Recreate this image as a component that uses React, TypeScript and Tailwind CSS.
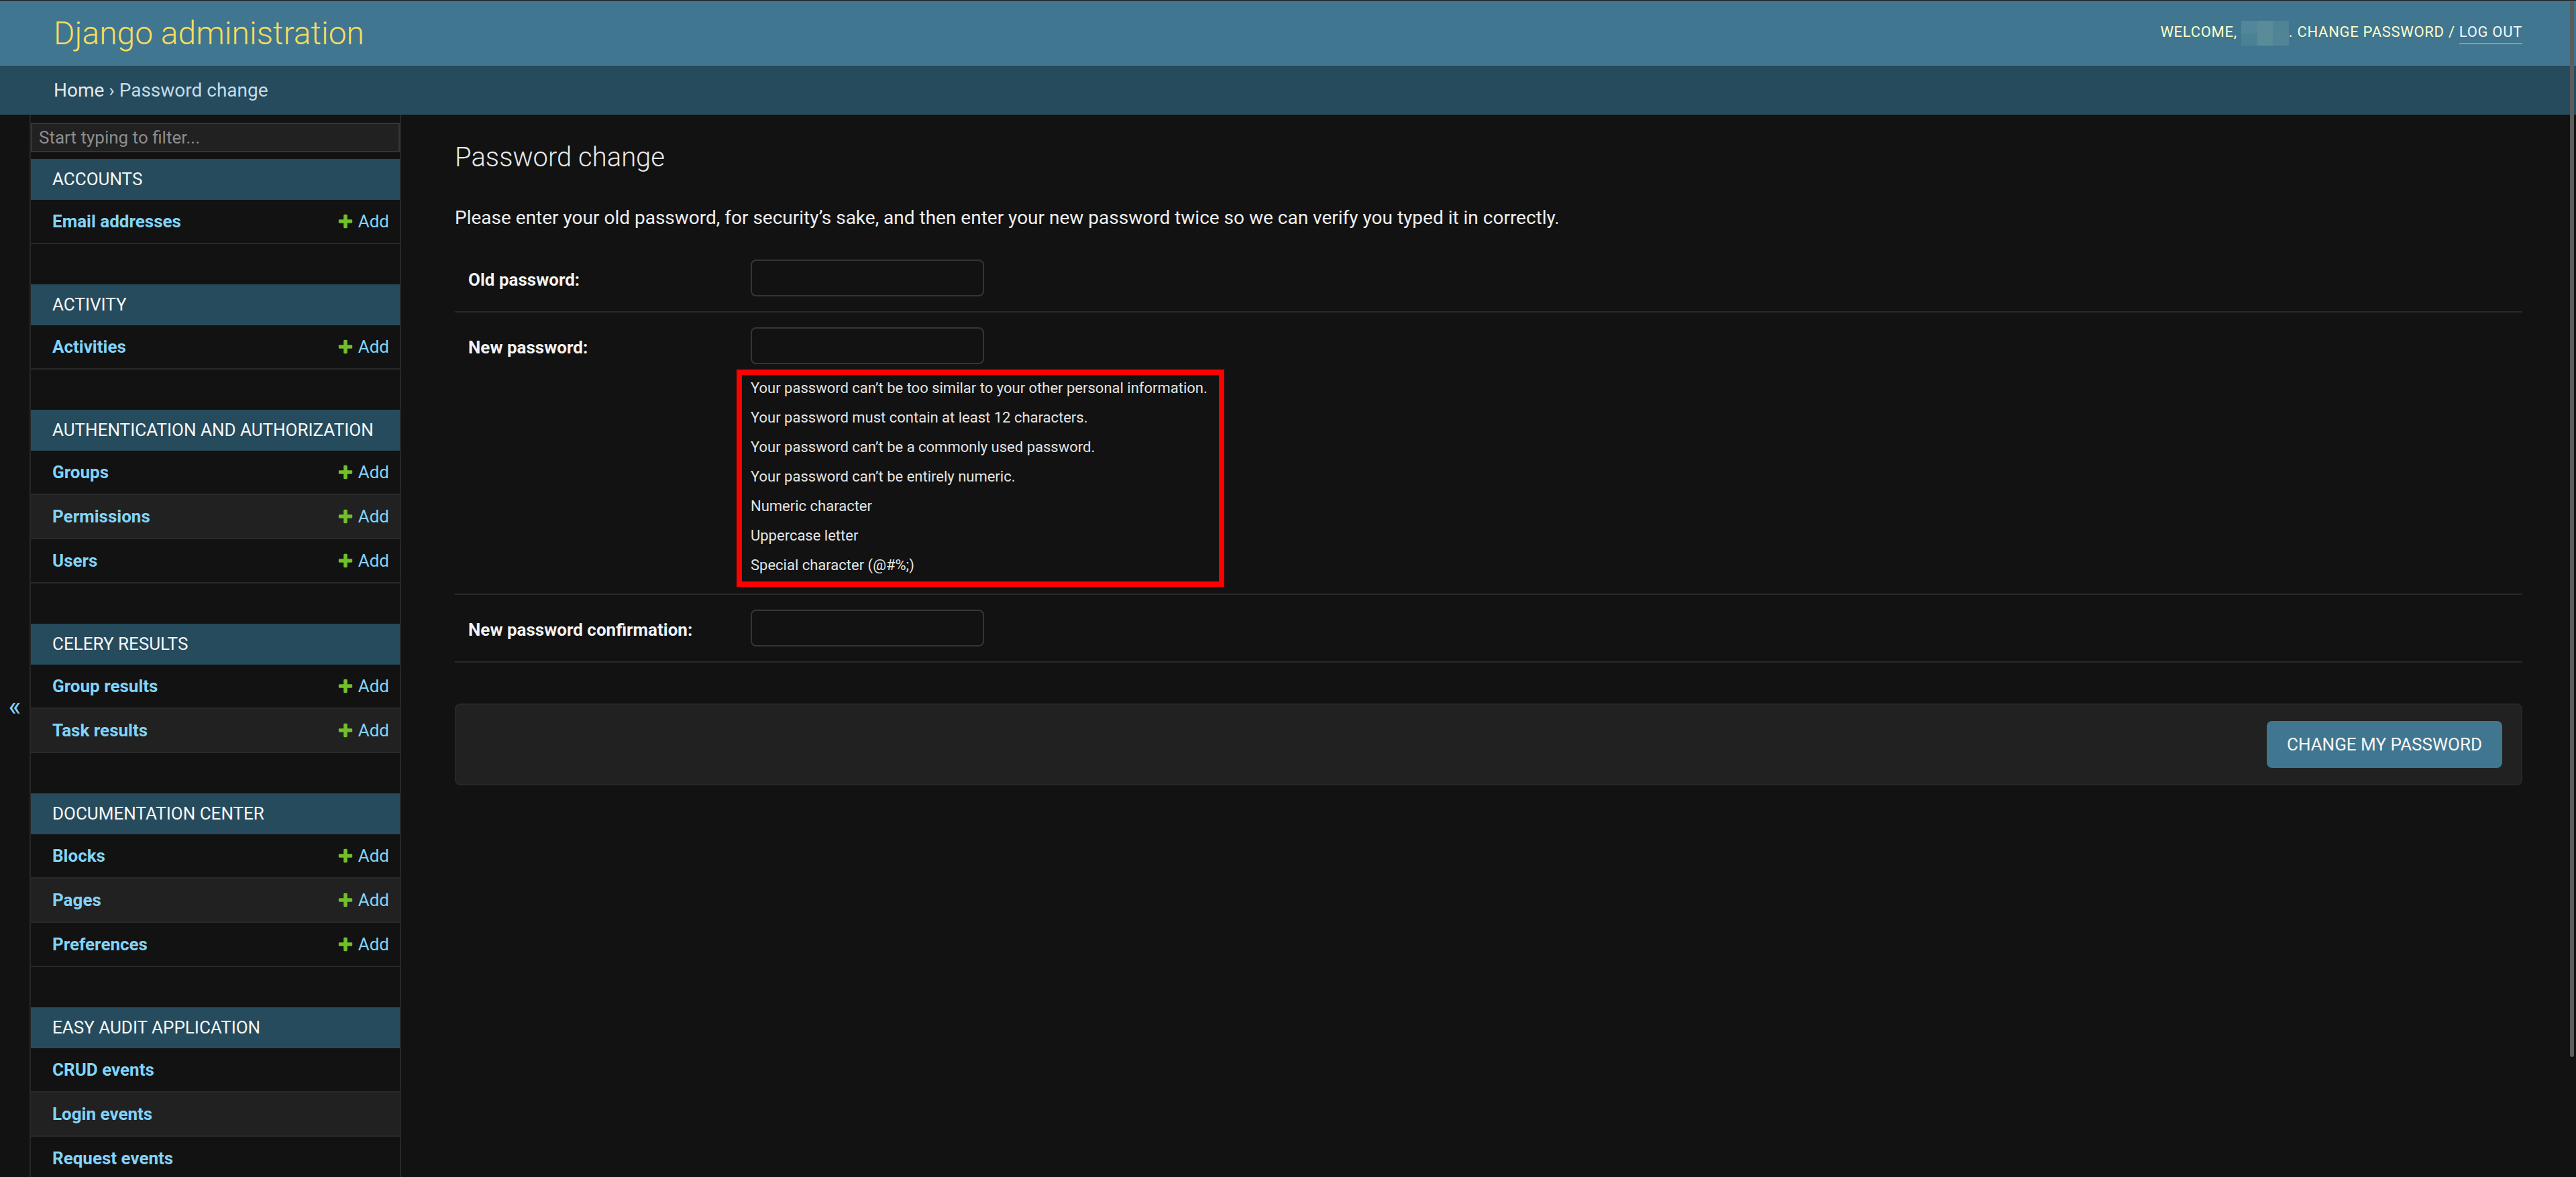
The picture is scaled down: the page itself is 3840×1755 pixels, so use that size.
import React from "react";

type Item = { name: string; add: boolean };
type Mod = { title: string; items: Item[] };

const modules: Mod[] = [
  { title: "Accounts", items: [{ name: "Email addresses", add: true }] },
  { title: "Activity", items: [{ name: "Activities", add: true }] },
  {
    title: "Authentication and Authorization",
    items: [
      { name: "Groups", add: true },
      { name: "Permissions", add: true },
      { name: "Users", add: true },
    ],
  },
  {
    title: "Celery Results",
    items: [
      { name: "Group results", add: true },
      { name: "Task results", add: true },
    ],
  },
  {
    title: "Documentation Center",
    items: [
      { name: "Blocks", add: true },
      { name: "Pages", add: true },
      { name: "Preferences", add: true },
    ],
  },
  {
    title: "Easy Audit Application",
    items: [
      { name: "CRUD events", add: false },
      { name: "Login events", add: false },
      { name: "Request events", add: false },
    ],
  },
];

const helpLines = [
  "Your password can\u2019t be too similar to your other personal information.",
  "Your password must contain at least 12 characters.",
  "Your password can\u2019t be a commonly used password.",
  "Your password can\u2019t be entirely numeric.",
  "Numeric character",
  "Uppercase letter",
  "Special character (@#%;)",
];

function PlusIcon() {
  return (
    <svg viewBox="0 0 1792 1792" className="w-[26px] h-[26px] shrink-0">
      <path
        fill="#70bf2b"
        d="M1600 796v192q0 40-28 68t-68 28h-416v416q0 40-28 68t-68 28h-192q-40 0-68-28t-28-68v-416h-416q-40 0-68-28t-28-68v-192q0-40 28-68t68-28h416v-416q0-40 28-68t68-28h192q40 0 68 28t28 68v416h416q40 0 68 28t28 68z"
      />
    </svg>
  );
}

function Field({ label }: { label: string }) {
  return (
    <div className="px-[20px] pt-[20px] pb-[20px] border-b-2 border-[#292929] flex items-start">
      <label className="w-[421px] shrink-0 pt-[16px] text-[26px] leading-[32px] font-bold text-[#f2f2f2]">
        {label}
      </label>
      <div className="my-[2px] w-[348px] h-[55px] border-2 border-[#353535] rounded-[8px] bg-[#121212]" />
    </div>
  );
}

export default function App() {
  return (
    <div className="relative w-[3840px] h-[1755px] overflow-hidden bg-[#121212] font-['Roboto',sans-serif]">
      {/* Header */}
      <header className="h-[98px] border-t border-[#1b1b1b] bg-[#417690] flex items-center justify-between px-[80px]">
        <h1 className="text-[48px] font-light text-[#f5dd5d] leading-[56px]">Django administration</h1>
        <div className="text-[22px] tracking-[0.7px] uppercase text-[#ffffcc] whitespace-nowrap">
          <span>Welcome, </span>
          <span className="inline-grid grid-cols-3 grid-rows-2 w-[71px] h-[37px] align-middle">
            <span className="bg-[#52879a]" />
            <span className="bg-[#5b8b99]" />
            <span className="bg-[#4f8396]" />
            <span className="bg-[#4b8194]" />
            <span className="bg-[#5a8b98]" />
            <span className="bg-[#508496]" />
          </span>
          <span>. Change password / </span>
          <span className="inline-block border-b-2 border-[#7f9fb2] text-[#f4f8fb]">Log out</span>
        </div>
      </header>

      {/* Breadcrumbs */}
      <div className="h-[73px] bg-[#264b5d] px-[80px] flex items-center text-[28px] text-[#c4dce8] whitespace-pre">
        <span className="text-[#e6e6e6]">Home</span>
        <span> › Password change</span>
      </div>

      {/* Main */}
      <div className="flex h-[1584px]">
        <div className="w-[46px] shrink-0 border-r-2 border-[#272727] flex justify-center pt-[859px] text-[40px] leading-[47px] text-[#81d4fa]">
          «
        </div>

        <nav className="w-[552px] shrink-0 border-r-2 border-[#272727] pt-[2px] overflow-hidden">
          <input
            placeholder="Start typing to filter..."
            readOnly
            className="block w-full h-[44px] my-[10px] px-[10px] border-2 border-[#353535] bg-[#212121] text-[26px] text-[#eeeeee] placeholder:text-[#8d8d8d] outline-none"
          />
          {modules.map((m) => (
            <div key={m.title} className="mb-[60px]">
              <div className="h-[61px] bg-[#264b5d] pl-[32px] flex items-center text-[26px] uppercase text-[#f7f7f7]">
                {m.title}
              </div>
              {m.items.map((it, i) => (
                <div
                  key={it.name}
                  className={
                    i % 2 === 1
                      ? "h-[66px] border-b-2 border-[#292929] bg-[#212121] flex items-center justify-between pl-[32px] pr-[16px]"
                      : "h-[66px] border-b-2 border-[#292929] flex items-center justify-between pl-[32px] pr-[16px]"
                  }
                >
                  <span className="text-[26px] font-bold text-[#81d4fa]">{it.name}</span>
                  {it.add && (
                    <span className="flex items-center gap-[6px] text-[26px] text-[#81d4fa]">
                      <PlusIcon />
                      Add
                    </span>
                  )}
                </div>
              ))}
            </div>
          ))}
        </nav>

        <main className="flex-1 px-[80px] pt-[40px] text-[#eeeeee]">
          <h1 className="text-[40px] font-light leading-[47px] mb-[47px] text-[#e8e8e8]">Password change</h1>
          <p className="text-[28px] leading-[40px] mb-[20px]">
            Please enter your old password, for security’s sake, and then enter your new password twice so we can verify you typed it in correctly.
          </p>

          <Field label="Old password:" />

          <div className="px-[20px] pt-[20px] pb-[20px] border-b-2 border-[#292929] flex items-start">
            <label className="w-[421px] shrink-0 pt-[16px] text-[26px] leading-[32px] font-bold text-[#f2f2f2]">
              New password:
            </label>
            <div className="flex flex-col">
              <div className="my-[2px] w-[348px] h-[55px] border-2 border-[#353535] rounded-[8px] bg-[#121212]" />
              <ul className="relative mt-[12px] text-[22px] leading-[44px] text-[#e4e4e4] whitespace-nowrap">
                {helpLines.map((l) => (
                  <li key={l}>{l}</li>
                ))}
                <div className="absolute left-[-21px] top-[-6px] w-[727px] h-[324px] border-[8px] border-[#ff0000]" />
              </ul>
            </div>
          </div>

          <Field label="New password confirmation:" />

          <div className="mt-[61px] h-[122px] border-2 border-[#272727] bg-[#212121] rounded-[8px] flex items-center justify-end pr-[28px]">
            <button className="w-[351px] h-[70px] rounded-[8px] bg-[#417690] text-[#f7f7f7] text-[26px] uppercase">
              Change my password
            </button>
          </div>
        </main>
      </div>

      {/* Scrollbar thumb */}
      <div className="absolute right-[3px] top-[2px] w-[6px] h-[1574px] rounded-full bg-[#5c5c5c]" />
    </div>
  );
}
